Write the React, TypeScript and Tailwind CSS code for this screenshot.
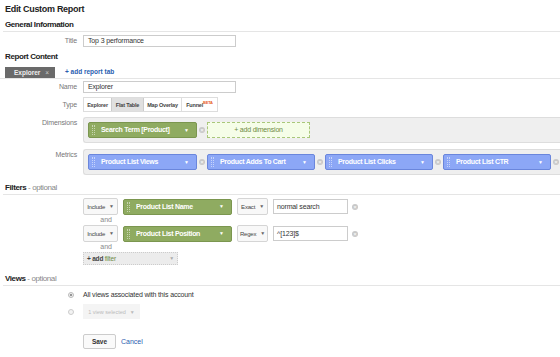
const font = { fontFamily: '"Liberation Sans", Arial, sans-serif' };

const Caret = ({ color = "text-white" }: { color?: string }) => (
  <span className={`text-[5px] leading-none ${color}`}>▼</span>
);

const Remove = () => (
  <span className="flex h-[6px] w-[6px] shrink-0 items-center justify-center rounded-full bg-[#c8c8c8] text-[6px] leading-none text-white">
    ×
  </span>
);

const Grip = () => (
  <span className="h-[10px] w-[3px] shrink-0 border-x border-dotted border-white/50" />
);

const Chip = ({
  label,
  color,
  width,
}: {
  label: string;
  color: "green" | "blue";
  width: string;
}) => (
  <div
    className={`flex h-[16px] ${width} shrink-0 items-center gap-[6px] rounded-[2px] border pl-[3px] pr-[7px] ${
      color === "green"
        ? "border-[#7b964f] bg-[#8fab61]"
        : "border-[#6a86dc] bg-[#8ca7f6]"
    }`}
  >
    <Grip />
    <span className="flex-1 truncate text-[7px] font-bold leading-[10px] tracking-[-0.3px] text-white">
      {label}
    </span>
    <Caret />
  </div>
);

const Select = ({ label, width }: { label: string; width: string }) => (
  <div
    className={`flex h-[17px] ${width} shrink-0 items-center justify-center gap-[4px] rounded-[2px] border border-[#d5d5d5] bg-[#f8f8f8] text-[6px] leading-[8px] tracking-[-0.2px] text-[#444]`}
  >
    <span>{label}</span>
    <Caret color="text-[#666]" />
  </div>
);

const Heading = ({ title, optional }: { title: string; optional?: boolean }) => (
  <div className="ml-[3px] h-[13px] border-b border-[#e5e5e5] pl-[2px] text-[8px] leading-[12px] tracking-[-0.4px]">
    <span className="font-bold text-[#222]">{title}</span>
    {optional && <span className="text-[#888]"> - optional</span>}
  </div>
);

const Row = ({
  label,
  children,
  className = "",
}: {
  label: string;
  children: React.ReactNode;
  className?: string;
}) => (
  <div className={`flex ${className}`}>
    <div className="w-[78px] shrink-0 pr-[1px] text-right text-[7px] leading-[12px] tracking-[-0.15px] text-[#777]">
      {label}
    </div>
    <div className="ml-[5px] flex-1">{children}</div>
  </div>
);

export default function App() {
  return (
    <div className="h-[357px] w-[560px] overflow-hidden bg-white text-[#333]" style={font}>
      <div className="h-[19px] pl-[5px] pt-[3px] text-[9px] font-bold leading-[13px] tracking-[-0.3px] text-[#222]">
        Edit Custom Report
      </div>

      <Heading title="General Information" />
      <Row label="Title" className="mt-[3px] h-[12px] items-center">
        <div className="flex h-[12px] w-[153px] items-center border border-[#ccc] px-[4px] text-[7px] leading-[10px] tracking-[-0.15px]">
          Top 3 performance
        </div>
      </Row>

      <div className="mt-[4px] h-[12px] pl-[5px] text-[8px] font-bold leading-[12px] tracking-[-0.4px] text-[#222]">
        Report Content
      </div>
      <div className="flex h-[16px] items-end gap-[10px] border-b border-[#e5e5e5] pl-[5px]">
        <div className="flex h-[11px] w-[50px] items-center justify-between bg-[#6a6a6a] pl-[9px] pr-[6px] text-[6.5px] font-bold leading-[10px] text-[#eee]">
          <span>Explorer</span>
          <span className="font-normal text-[#ccc]">×</span>
        </div>
        <span className="pb-[1px] text-[6.5px] font-bold leading-[10px] text-[#2a5db0]">
          + add report tab
        </span>
      </div>

      <Row label="Name" className="mt-[2px] h-[12px] items-center">
        <div className="flex h-[12px] w-[153px] items-center border border-[#ccc] px-[4px] text-[7px] leading-[10px] tracking-[-0.15px]">
          Explorer
        </div>
      </Row>

      <Row label="Type" className="mt-[4px] h-[15px] items-center">
        <div className="flex h-[15px] w-[135px] whitespace-nowrap border border-[#ddd] text-[5.5px] font-bold leading-[10px] tracking-[-0.2px] text-[#444]">
          <div className="flex w-[27px] items-center justify-center">Explorer</div>
          <div className="flex w-[33px] items-center justify-center border-x border-[#ccc] bg-[#e0e0e0]">
            Flat Table
          </div>
          <div className="flex w-[38px] items-center justify-center border-r border-[#ddd]">
            Map Overlay
          </div>
          <div className="flex flex-1 items-center justify-center">
            Funnel<sup className="text-[4px] text-[#e8632b]">BETA</sup>
          </div>
        </div>
      </Row>

      <Row label="Dimensions" className="mt-[5px]">
        <div className="flex h-[26px] items-center gap-[2px] rounded-l-[3px] border border-r-0 border-[#ddd] bg-[#efefef] pl-[4px]">
          <Chip label="Search Term [Product]" color="green" width="w-[109px]" />
          <Remove />
          <div className="flex h-[16px] w-[103px] items-center justify-center border border-dashed border-[#a9c77a] bg-[#f5fde8] text-[7px] leading-[10px] tracking-[-0.2px] text-[#6d8a45]">
            + add dimension
          </div>
        </div>
      </Row>

      <Row label="Metrics" className="mt-[6px]">
        <div className="flex h-[26px] items-center gap-[2px] rounded-l-[3px] border border-r-0 border-[#ddd] bg-[#efefef] pl-[4px]">
          <Chip label="Product List Views" color="blue" width="w-[109px]" />
          <Remove />
          <Chip label="Product Adds To Cart" color="blue" width="w-[108px]" />
          <Remove />
          <Chip label="Product List Clicks" color="blue" width="w-[108px]" />
          <Remove />
          <Chip label="Product List CTR" color="blue" width="w-[108px]" />
          <Remove />
        </div>
      </Row>

      <div className="mt-[7px]">
        <Heading title="Filters" optional />
      </div>

      <div className="ml-[83px] mt-[3px] flex flex-col">
        {[
          { field: "Product List Name", match: "Exact", value: "normal search" },
          { field: "Product List Position", match: "Regex", value: "^[123]$" },
        ].map((f) => (
          <div key={f.field}>
            <div className="flex h-[17px] items-center">
              <Select label="Include" width="w-[35px]" />
              <div className="ml-[5px]">
                <Chip label={f.field} color="green" width="w-[109px]" />
              </div>
              <div className="ml-[5px]">
                <Select label={f.match} width="w-[31px]" />
              </div>
              <div className="ml-[5px] flex h-[15px] w-[75px] items-center border border-[#ccc] px-[3px] text-[7px] leading-[10px] tracking-[-0.15px]">
                {f.value}
              </div>
              <div className="ml-[4px]">
                <Remove />
              </div>
            </div>
            <div className="h-[10px] w-[29px] text-right text-[7px] leading-[10px] text-[#888]">and</div>
          </div>
        ))}
        <div className="flex h-[13px] w-[95px] items-center justify-between border border-dotted border-[#ccc] bg-[#ececec] px-[3px] text-[6.5px] leading-[8px] tracking-[-0.2px]">
          <span>
            <span className="font-bold text-[#444]">+ add </span>
            <span className="text-[#6d8a45]">filter</span>
          </span>
          <Caret color="text-[#aaa]" />
        </div>
      </div>

      <div className="mt-[8px]">
        <Heading title="Views" optional />
      </div>

      <div className="mt-[3px] flex h-[11px] items-center">
        <div className="flex w-[83px] justify-end pr-[9px]">
          <span className="flex h-[6px] w-[6px] items-center justify-center rounded-full border border-[#bbb] bg-[#eee]">
            <span className="h-[2px] w-[2px] rounded-full bg-[#777]" />
          </span>
        </div>
        <span className="text-[7px] leading-[10px] tracking-[-0.15px] text-[#333]">
          All views associated with this account
        </span>
      </div>
      <div className="mt-[4px] flex h-[15px] items-center">
        <div className="flex w-[83px] justify-end pr-[9px]">
          <span className="h-[6px] w-[6px] rounded-full border border-[#ccc] bg-[#f3f3f3]" />
        </div>
        <div className="flex h-[15px] w-[57px] items-center justify-center gap-[4px] bg-[#f4f4f4] text-[5.5px] leading-[8px] text-[#bbb]">
          <span>1 view selected</span>
          <span className="text-[5px]">▼</span>
        </div>
      </div>

      <div className="ml-[83px] mt-[15px] flex items-center gap-[5px]">
        <div className="flex h-[15px] w-[33px] items-center justify-center rounded-[2px] border border-[#ccc] bg-[#fafafa] text-[6.5px] font-bold leading-[8px] text-[#333]">
          Save
        </div>
        <span className="text-[7px] leading-[10px] text-[#2a5db0]">Cancel</span>
      </div>
    </div>
  );
}
